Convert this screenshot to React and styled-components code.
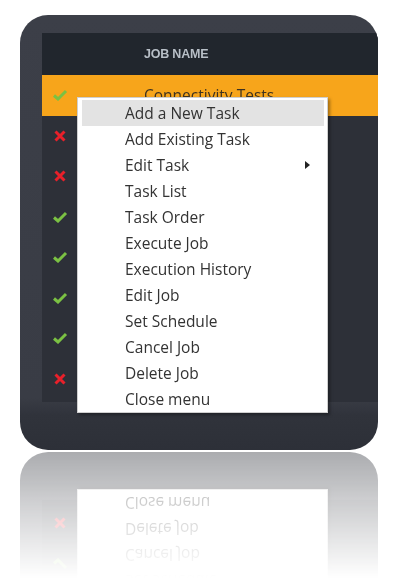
import React from "react";
import styled, { createGlobalStyle } from "styled-components";

const GlobalStyle = createGlobalStyle`
  html, body {
    margin: 0;
    padding: 0;
    background: #ffffff;
  }
  body {
    font-family: "Open Sans", "Noto Sans", sans-serif;
  }
`;

const Stage = styled.div`
  width: 400px;
  height: 581px;
  box-sizing: border-box;
  padding: 15px 0 0 20px;
  overflow: hidden;
`;

const Frame = styled.div`
  position: relative;
  width: 358px;
  height: 435px;
  box-sizing: border-box;
  padding: 18px 0 0 22px;
  border-radius: 28px;
  overflow: hidden;
  background: linear-gradient(
    to bottom,
    #3c3f48 0%,
    #393c45 88%,
    #30333b 92%,
    #2d3038 100%
  );
  -webkit-box-reflect: below 2px
    linear-gradient(to bottom, transparent 71%, rgba(255, 255, 255, 0.4));
`;

const Panel = styled.div`
  display: flex;
  flex-direction: column;
  width: 336px;
  height: 369px;
  background: #2d3038;
`;

const HeaderRow = styled.div`
  display: grid;
  grid-template-columns: 36px 1fr;
  align-items: center;
  height: 42px;
  background: #21262d;
`;

const HeaderLabel = styled.div`
  grid-column: 2;
  padding-left: 66px;
  font-family: "Liberation Sans", Arial, sans-serif;
  font-weight: 700;
  font-size: 12.5px;
  color: #b8bfc7;
  letter-spacing: -0.2px;
`;

const Row = styled.div`
  display: grid;
  grid-template-columns: 36px 1fr;
  align-items: center;
  height: 40.5px;
  background: ${(p) => (p.$active ? "#f7a51b" : "transparent")};
`;

const IconCell = styled.div`
  display: flex;
  align-items: center;
  justify-content: center;
`;

const JobName = styled.div`
  padding-left: 66px;
  font-size: 15.5px;
  color: #3d3220;
  white-space: nowrap;
`;

const Menu = styled.ul`
  position: absolute;
  left: 57px;
  top: 82px;
  width: 251px;
  box-sizing: border-box;
  margin: 0;
  padding: 2px 3px 0 4px;
  list-style: none;
  background: #ffffff;
  border: 1px solid #cfcfcf;
  box-shadow: 2px 2px 3px rgba(0, 0, 0, 0.35);
`;

const MenuItem = styled.li`
  display: flex;
  align-items: center;
  justify-content: space-between;
  height: 26px;
  padding: 0 14px 0 43px;
  font-size: 15.5px;
  color: #333333;
  background: ${(p) => (p.$active ? "#e3e3e3" : "transparent")};
`;

const Check = () => (
  <svg width="16" height="12" viewBox="0 0 16 12">
    <polyline
      points="2,6.5 6,10 14,2"
      fill="none"
      stroke="#7bc143"
      strokeWidth="3"
    />
  </svg>
);

const Cross = () => (
  <svg width="12" height="12" viewBox="0 0 12 12">
    <path d="M1.5 1.5 L10.5 10.5 M10.5 1.5 L1.5 10.5" stroke="#e8202a" strokeWidth="3" />
  </svg>
);

const Arrow = () => (
  <svg width="5" height="8" viewBox="0 0 5 8">
    <polygon points="0,0 5,4 0,8" fill="#222" />
  </svg>
);

const jobs = [
  { ok: true, name: "Connectivity Tests", active: true },
  { ok: false },
  { ok: false },
  { ok: true },
  { ok: true },
  { ok: true },
  { ok: true },
  { ok: false },
];

const menuItems = [
  "Add a New Task",
  "Add Existing Task",
  "Edit Task",
  "Task List",
  "Task Order",
  "Execute Job",
  "Execution History",
  "Edit Job",
  "Set Schedule",
  "Cancel Job",
  "Delete Job",
  "Close menu",
];

export default function App() {
  return (
    <>
      <GlobalStyle />
      <Stage>
        <Frame>
          <Panel>
            <HeaderRow>
              <HeaderLabel>JOB NAME</HeaderLabel>
            </HeaderRow>
            {jobs.map((job, i) => (
              <Row key={i} $active={job.active}>
                <IconCell>{job.ok ? <Check /> : <Cross />}</IconCell>
                <JobName>{job.name}</JobName>
              </Row>
            ))}
          </Panel>
          <Menu>
            {menuItems.map((label, i) => (
              <MenuItem key={label} $active={i === 0}>
                <span>{label}</span>
                {label === "Edit Task" && <Arrow />}
              </MenuItem>
            ))}
          </Menu>
        </Frame>
      </Stage>
    </>
  );
}
